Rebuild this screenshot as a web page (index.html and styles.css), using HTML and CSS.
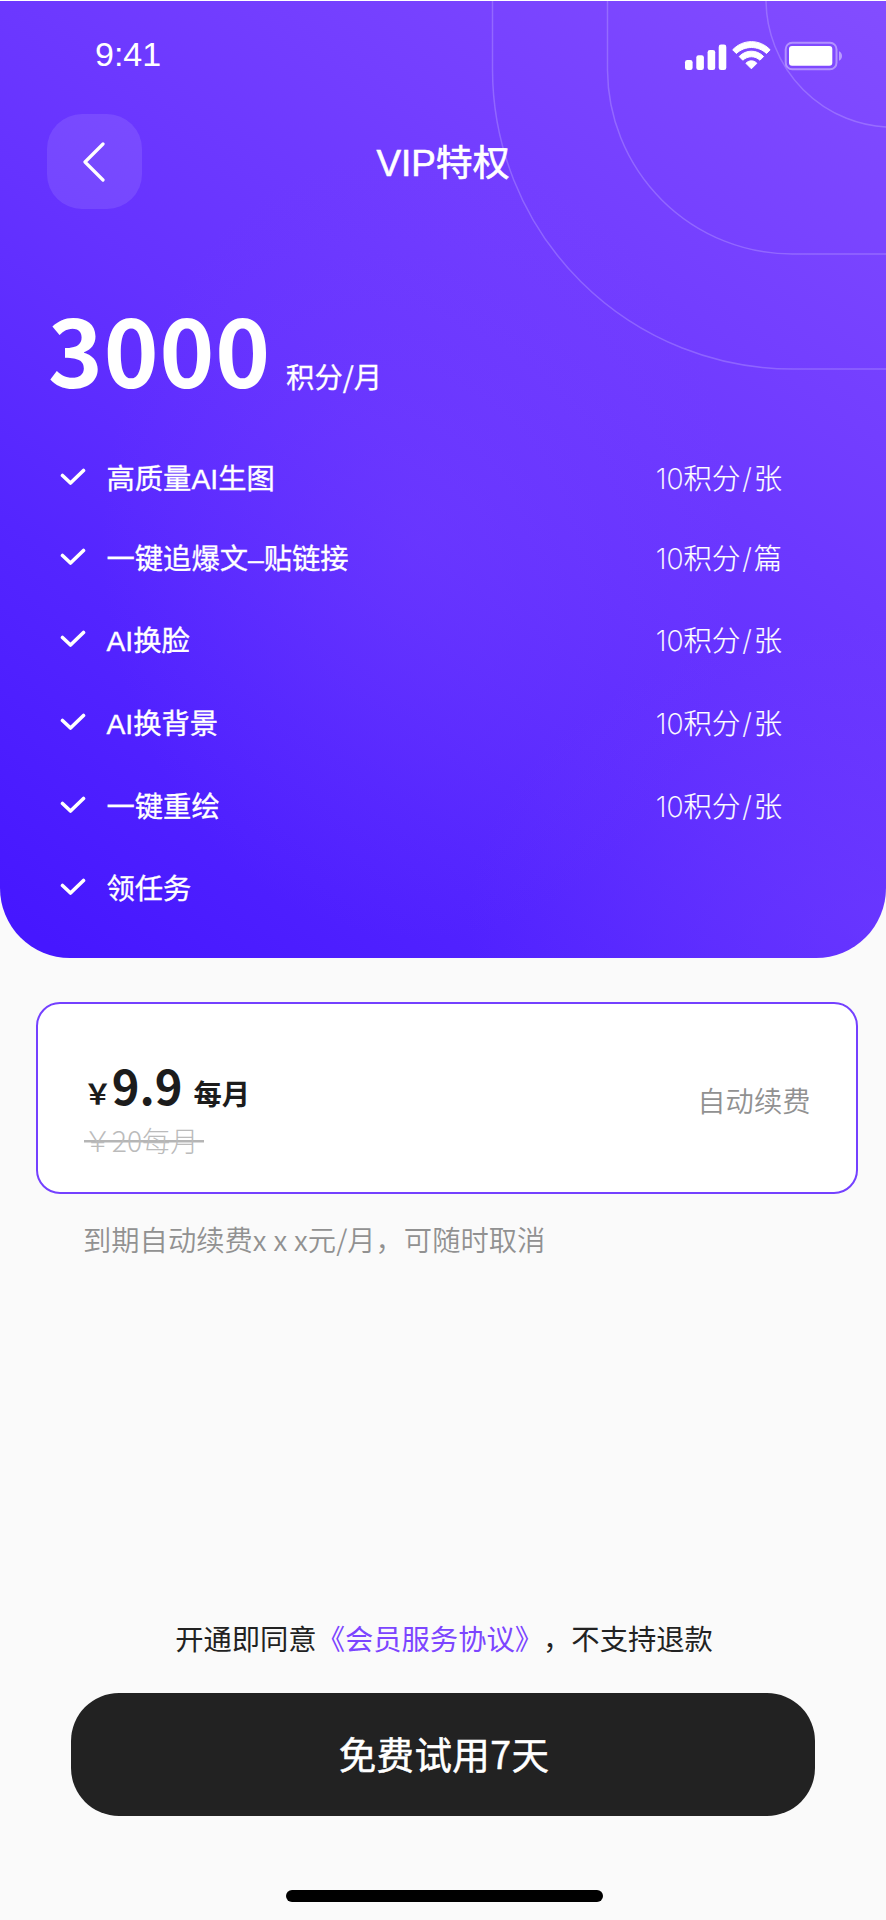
FILE: index.html
```html
<!DOCTYPE html>
<html lang="zh-CN">
<head>
<meta charset="utf-8">
<title>VIP特权</title>
<link rel="stylesheet" href="styles.css">
</head>
<body>
<main class="screen">
  <section class="hero">
    <svg class="rings" width="400" height="380" viewBox="486 0 400 380" fill="none" stroke="#fff" stroke-opacity=".2" stroke-width="1.5">
      <path d="M492.500 0V69A300 300 0 0 0 792.500 368H886"/>
      <path d="M607.500 0V69A185 185 0 0 0 792.500 253H886"/>
      <path d="M766 -2A127.500 128 0 0 0 893.500 126.300"/>
    </svg>
    <header class="status">
      <span class="time">9:41</span>
      <svg class="indicators" width="160" height="32" viewBox="684 40 160 32" fill="#fff">
        <rect x="685" y="60" width="7.600" height="10" rx="2.300"/>
        <rect x="696.300" y="55.200" width="7.600" height="14.800" rx="2.300"/>
        <rect x="707.600" y="50" width="7.600" height="20" rx="2.300"/>
        <rect x="718.700" y="44.600" width="7.600" height="25.400" rx="2.300"/>
        <path d="M732.700 49.800C743 38.900 759.800 38.900 770.100 49.800L766.500 53.500C758 45.500 744.800 45.500 736.300 53.500Z" stroke="#fff" stroke-width="1" stroke-linejoin="round"/>
        <path d="M739.200 56.500C746 49.400 756.800 49.400 763.600 56.500L760 60.200C755 55.600 747.800 55.600 742.800 60.200Z" stroke="#fff" stroke-width="1" stroke-linejoin="round"/>
        <path d="M745.900 63.300C749 60 753.800 60 756.900 63.300L751.400 68.800Z" stroke="#fff" stroke-width="1" stroke-linejoin="round"/>
        <rect x="785.700" y="42.700" width="50.800" height="26.600" rx="6.500" fill="none" stroke="#fff" stroke-opacity=".4" stroke-width="2"/>
        <rect x="789" y="46" width="43.300" height="19.700" rx="3"/>
        <path d="M839 51.200C843 53 843 59 839 60.800Z" fill-opacity=".45"/>
      </svg>
    </header>
    <nav class="navbar">
      <button class="back" aria-label="返回">
        <svg width="24" height="42" viewBox="0 0 24 42" fill="none" stroke="#fff" stroke-width="3.200" stroke-linecap="round" stroke-linejoin="round"><path d="M20 3L2 21L20 39"/></svg>
      </button>
      <h1 class="title">VIP特权</h1>
    </nav>
    <div class="quota"><strong class="points">3000</strong><span class="unit">积分/月</span></div>
    <ul class="perks">
      <li class="perk first"><svg class="tick" viewBox="0 0 26 18"><path d="M2.500 7.500L10.500 15L23.500 2.500"/></svg><span class="name">高质量AI生图</span><span class="cost">10积分<i class="slash">/</i>张</span></li>
      <li class="perk"><svg class="tick" viewBox="0 0 26 18"><path d="M2.500 7.500L10.500 15L23.500 2.500"/></svg><span class="name">一键追爆文–贴链接</span><span class="cost">10积分<i class="slash">/</i>篇</span></li>
      <li class="perk"><svg class="tick" viewBox="0 0 26 18"><path d="M2.500 7.500L10.500 15L23.500 2.500"/></svg><span class="name">AI换脸</span><span class="cost">10积分<i class="slash">/</i>张</span></li>
      <li class="perk"><svg class="tick" viewBox="0 0 26 18"><path d="M2.500 7.500L10.500 15L23.500 2.500"/></svg><span class="name">AI换背景</span><span class="cost">10积分<i class="slash">/</i>张</span></li>
      <li class="perk"><svg class="tick" viewBox="0 0 26 18"><path d="M2.500 7.500L10.500 15L23.500 2.500"/></svg><span class="name">一键重绘</span><span class="cost">10积分<i class="slash">/</i>张</span></li>
      <li class="perk"><svg class="tick" viewBox="0 0 26 18"><path d="M2.500 7.500L10.500 15L23.500 2.500"/></svg><span class="name">领任务</span></li>
    </ul>
  </section>

  <section class="plan">
    <div class="prices">
      <div class="price"><span class="yen">￥</span><span class="amount">9.9</span><span class="period">每月</span></div>
      <div class="old">￥20每月</div>
    </div>
    <span class="renew">自动续费</span>
  </section>
  <p class="note">到期自动续费x x x元/月，可随时取消</p>

  <footer class="footer">
    <p class="terms">开通即同意<a class="link">《会员服务协议》</a>，不支持退款</p>
    <button class="cta">免费试用7天</button>
    <div class="home"></div>
  </footer>
</main>
</body>
</html>
```

FILE: styles.css
```css
* { box-sizing: border-box; margin: 0; padding: 0; }

body {
  background: #fafafa;
  font-family: "Noto Sans CJK SC", sans-serif;
  font-size: 28.3px;
  color: #222;
}

button { border: 0; font: inherit; }

.screen {
  width: 886px;
  height: 1920px;
  padding-top: 1px;
  display: flex;
  flex-direction: column;
  overflow: hidden;
  box-shadow: inset 0 1px #fff;
}

.hero {
  position: relative;
  height: 956.500px;
  flex: none;
  border-radius: 0 0 70px 70px;
  overflow: hidden;
  color: #fff;
  background:
    radial-gradient(ellipse 320px 400px at 420px 540px, rgba(124, 72, 255, .26), rgba(124, 72, 255, 0)),
    radial-gradient(ellipse 420px 300px at 886px 920px, rgba(124, 72, 255, .32), rgba(124, 72, 255, 0)),
    linear-gradient(215deg, #834dff 0%, #733eff 28%, #6532ff 50%, #5425ff 72%, #4617ff 97%);
}

.rings { position: absolute; top: 0; right: 0; }

.status {
  position: relative;
  display: flex;
  justify-content: space-between;
  align-items: center;
  height: 109px;
  padding: 0 42px 0 95px;
}
.time { font: 34px/40px "Liberation Sans", sans-serif; margin-top: -3px; }
.indicators { margin-top: 1px; }

.navbar {
  position: relative;
  display: grid;
  grid-template-columns: 95px 1fr 95px;
  align-items: center;
  height: 103px;
  padding: 0 47px;
}
.back {
  display: flex;
  align-items: center;
  justify-content: center;
  width: 95px;
  height: 95px;
  border-radius: 35px;
  background: rgba(255, 255, 255, .1);
}
.title {
  margin-top: 4px;
  font: 400 36.800px/48px "Liberation Sans", "Noto Sans CJK SC", sans-serif;
  text-align: center;
  -webkit-text-stroke: .6px #fff;
}

.quota {
  display: flex;
  align-items: baseline;
  gap: 15px;
  height: 226px;
  padding: 65px 0 0 48px;
}
.points { font-size: 93px; line-height: 140px; font-weight: 700; letter-spacing: .9px; }
.unit { font-weight: 400; -webkit-text-stroke: .3px #fff; }

.perks { list-style: none; padding: 0 104px 0 60px; }
.perk { display: flex; align-items: center; height: 82.600px; }
.perk.first { height: 78px; }
.tick {
  width: 26px;
  height: 18px;
  margin: -3px 20.500px 0 0;
  fill: none;
  stroke: #fff;
  stroke-width: 3.600;
  stroke-linecap: round;
  stroke-linejoin: round;
}
.name {
  flex: 1;
  margin-top: -4px;
  font-family: "Liberation Sans", "Noto Sans CJK SC", sans-serif;
  font-weight: 400;
  -webkit-text-stroke: .35px #fff;
}
.cost {
  margin-top: -4px;
  font-family: Inter, "Noto Sans CJK SC", sans-serif;
  font-weight: 200;
  -webkit-text-stroke: .2px #fff;
}
.slash { font-style: normal; padding: 0 2px; }

.plan {
  display: flex;
  justify-content: space-between;
  width: 822px;
  height: 192px;
  flex: none;
  margin: 44.500px 0 0 35.500px;
  padding: 53px 45px 0 46px;
  border: 2.500px solid #7440ff;
  border-radius: 24px;
  background: #fff;
}
.price { display: flex; align-items: baseline; height: 65px; line-height: 56px; font-weight: 700; color: #1c1c1c; }
.amount { font-size: 47px; }
.period { margin-left: 11px; }
.old {
  width: 120px;
  font-weight: 300;
  line-height: 36px;
  color: #bbb;
  background: linear-gradient(#b5b5b5, #b5b5b5) 0 18px / 100% 2.500px no-repeat;
}
.renew { font-weight: 350; line-height: 42px; margin-top: 22px; color: #919191; }
.note { margin: 24px 0 0 83px; line-height: 42px; font-weight: 350; color: #919191; word-spacing: .6px; }

.footer { margin-top: auto; display: flex; flex-direction: column; align-items: center; }
.terms { margin-left: 2px; line-height: 42px; text-spacing-trim: space-all; font-feature-settings: "chws" 0, "halt" 0; }
.link { color: #7c45ff; }
.cta {
  width: 744px;
  height: 123px;
  margin-top: 34px;
  padding: 0 0 5px 2px;
  border-radius: 48px;
  background: #222;
  color: #fff;
  font-size: 37.500px;
  font-weight: 400;
  letter-spacing: .4px;
  -webkit-text-stroke: .5px #fff;
}
.home { width: 317px; height: 12px; margin: 73.500px 0 18.500px 2px; border-radius: 6px; background: #000; }
```
